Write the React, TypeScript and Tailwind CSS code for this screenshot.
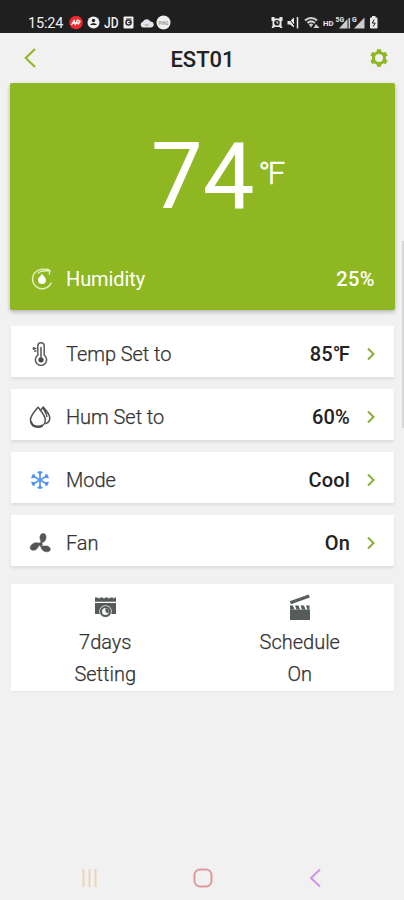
import type { ReactNode } from 'react';

interface RowProps {
  icon: ReactNode;
  label: string;
  value: ReactNode;
}

function StatusBar() {
  return (
    <header className="flex h-[33px] items-end bg-[#1f1f1f] pb-[1px] pl-7 text-[#efefef]">
      <span className="w-[36px] text-[14.500px] leading-[16px] tracking-[-0.2px]">15:24</span>
      <svg className="ml-[5px] mb-[2px]" width="104" height="15" viewBox="0 0 104 15">
        <circle cx="7" cy="7.500" r="6.800" fill="#ee2a2e" />
        <path d="M2.500 10 5 5.500l1.300 4L8.500 5l2.500 1.500-2 3M3.500 8h6" fill="none" stroke="#fff" strokeWidth="1.300" />
        <circle cx="24.500" cy="7.500" r="6" fill="#efefef" />
        <circle cx="24.500" cy="5.500" r="1.700" fill="#222" />
        <path d="M21.300 10c0-2.500 6.400-2.500 6.400 0z" fill="#222" />
        <text x="35" y="12.500" fontSize="14.500" fontWeight="500" fill="#efefef" textLength="14.500" lengthAdjust="spacingAndGlyphs">JD</text>
        <rect x="54.500" y="1.500" width="10" height="12" rx="1" fill="#efefef" />
        <circle cx="59.500" cy="7.500" r="2.500" fill="none" stroke="#333" strokeWidth="1.600" />
        <path d="M57 4h5.500M59 7.500h4" stroke="#333" />
        <path d="M73.500 12.500a3.100 3.100 0 0 1 .3-5.800 4.200 4.200 0 0 1 7.500-.2 3 3 0 0 1 .8 6z" fill="#e5e5e5" />
        <path d="m76 9 1.800 1.700L79.600 9" stroke="#888" fill="none" />
        <circle cx="94.500" cy="7.500" r="7" fill="#efefef" />
        <text x="89.500" y="9.500" fontSize="5" fontWeight="700" fill="#999" textLength="10" lengthAdjust="spacingAndGlyphs">PING</text>
      </svg>
      <svg className="ml-[98px] mb-[2px]" width="108" height="15" viewBox="0 0 108 15" fill="#e9e9e9">
        <path d="M.5 2h3v1.500h5V2h3v4h-1v5l1 2h-2l-1-1h-5l-1 1h-2l1-2V6h-1z" />
        <circle cx="6" cy="7.800" r="2.800" fill="#222" />
        <path d="M6 6v2h1.500" fill="none" stroke="#fff" strokeWidth=".9" />
        <path d="M16.500 6h2.500l4-3.500v10L19 9.500h-2.500z" />
        <path d="m17 2 8 11" stroke="#1f1f1f" strokeWidth="1" />
        <path d="M26.500 2v11.500" stroke="#e9e9e9" strokeWidth="1.500" />
        <path d="M34 5.500c3.500-3.500 9-3.500 12 0M36.500 8c2-2 5-2 7.500 0M38.500 10.300c1-1 2-1 3 0" fill="none" stroke="#d0d0d0" strokeWidth="2" />
        <path d="m38.500 10.500 1.500 2 1.500-2zM42.500 13l2.500-4 3.500 4z" fill="#d0d0d0" />
        <text x="52" y="10.500" fontSize="7.500" fontWeight="700" textLength="10.500" lengthAdjust="spacingAndGlyphs">HD</text>
        <text x="64.500" y="7" fontSize="7" fontWeight="700" textLength="8.500" lengthAdjust="spacingAndGlyphs">5G</text>
        <path d="M68 13.500 76.500 4v9.500zM77.500 3h1.600v10.500h-1.600z" fill="#ccc" />
        <text x="81" y="7" fontSize="7" fontWeight="700">G</text>
        <path d="M83 13.500 93.500 2.500v11z" fill="#ccc" />
        <path d="M100 2.500h1V1h3.500v1.500h1q1 0 1 1v9q0 1-1 1H100q-1 0-1-1v-9q0-1 1-1z" />
        <path d="m103.200 4.500-2 3.500h3l-2 3.500" fill="none" stroke="#222" />
      </svg>
    </header>
  );
}

function BackIcon() {
  return (
    <svg width="12" height="20" viewBox="0 0 12 20" fill="none" stroke="#8eb722" strokeWidth="2">
      <path d="M11 1 1.700 10 11 19" />
    </svg>
  );
}

function GearIcon() {
  return (
    <svg width="18" height="18" viewBox="0 0 18 18" fill="none" stroke="#8eb722">
      <circle cx="9" cy="9" r="5.500" strokeWidth="3" />
      <path d="M9 .2v3M9 14.800v3M1.400 4.600 4 6.100M14 11.900l2.600 1.500M1.400 13.400 4 11.900M14 6.100l2.600-1.500" strokeWidth="4.200" />
    </svg>
  );
}

function HumidityIcon() {
  return (
    <svg width="22" height="22" viewBox="0 0 22 22" fill="none" stroke="#e6f1bf" strokeWidth="1.400">
      <path d="M20.300 14.500A9.700 9.700 0 1 1 7 2.300" />
      <path d="M7 5.500C9.500 2.300 13 2.500 18 3M6.500 2.500C9 1 14 .8 16.500 1.500M16 .8l3 1.700-.8 4" />
      <path d="M11 5.800c1.700 2.600 4 4.200 4 6.200a4 4 0 0 1-8 0c0-2 2.300-3.600 4-6.200z" fill="#fff" stroke="none" />
    </svg>
  );
}

function ThermometerIcon() {
  return (
    <svg width="16" height="24" viewBox="0 0 16 24" fill="none" stroke="#5c5c5c" strokeWidth="1.500">
      <path d="M5.800 13.200V4a3.200 3.200 0 0 1 6.400 0v9.200a5.600 5.600 0 1 1-6.400 0z" />
      <circle cx="9" cy="17.800" r="2.600" fill="#444" stroke="none" />
      <path d="M9 5v12" strokeWidth="1.600" />
      <path d="M.5 6.500h4M2 9h2.500M1.800 5v3" />
    </svg>
  );
}

function DropsIcon() {
  return (
    <svg width="22" height="24" viewBox="0 0 22 24" fill="none" stroke="#505050" strokeWidth="1.500" strokeLinejoin="round">
      <path d="M9 2.300C6 6 1.500 10.500 1.500 15c0 3.500 3 6.500 7.500 6.500s7.300-2.800 7.300-6.500C16.300 10.500 12 6 9 2.300z" />
      <path d="M1.800 16.500c.8 3.300 3.500 5.400 7 5.400 2 0 3.500-.6 4.700-1.600" strokeWidth="2.200" />
      <path d="M11.800 5 14.300 2c2.700 3.500 6.500 7 6.500 11 0 3-1.800 5-4.600 5.800M14 2.200c.5 3 4.300 5.800 3.800 10" />
    </svg>
  );
}

function SnowIcon() {
  return (
    <svg width="20" height="20" viewBox="0 0 20 20" stroke="#5293ec" strokeWidth="1.600" fill="#5293ec">
      <path d="M10 1v18M2 5.500l16 9M2 14.500l16-9" />
      <path d="M10 4.500 7.500 2h5zM10 15.500 7.500 18h5zM5 7.200l-3.400.7 2.100-4zM15 12.800l3.400-.7-2.100 4zM5 12.800l-3.400-.7 2.100 4zM15 7.200l3.400.7-2.100-4z" strokeWidth=".9" />
    </svg>
  );
}

function FanIcon() {
  return (
    <svg width="22" height="22" viewBox="0 0 22 22" fill="#555" stroke="#555" strokeWidth=".6">
      <path d="M12 10.500C12 8 10.500 7 11 4.500 11.500 2 13.500.8 15.300 1.700c2.300 1.200 2 4.600.8 6.800-.9 1.500-2.300 2-4.100 2z" />
      <path d="M10.500 11.800c-1.500-1.300-4-1.500-6.200-.3C1.500 13 .6 15.500 1.500 17c1.200 1.900 4.300 1.500 6.200 0 1.600-1.400 1.800-3.200 2.800-5.200z" />
      <path d="M11.500 13.500c.6 1.800.6 3.200 2.300 4.700 2 1.700 5.200 2.200 6.800.8 1.400-1.400.7-3.800-1.600-4.700-2.200-.9-4 .4-7.500-.8z" />
      <circle cx="11.500" cy="12.200" r="1.800" />
    </svg>
  );
}

function CalendarIcon() {
  return (
    <svg width="23" height="22" viewBox="0 0 23 22" fill="#555b5a">
      <path d="M1 1.500h3L5 3l1-1.500h3l1 1.500 1-1.500h3l1 1.500 1-1.500h3l.8 1.500.7-1.500h1.500v4.300H1z" />
      <path d="M1 7h21v11H1z" />
      <circle cx="11.500" cy="15.500" r="6.300" fill="#e4e6e5" />
      <circle cx="11.500" cy="15.500" r="5.500" />
      <circle cx="11.500" cy="15.500" r="3.500" fill="#f4f4f4" />
      <path d="M11.500 12v3.500l2.500 2.200c2-2.500.3-5.700-2.500-5.700z" />
    </svg>
  );
}

function ClapperIcon() {
  return (
    <svg width="22" height="26" viewBox="0 0 22 26" fill="#555b5a">
      <path d="M.8 7.200 19.600.4l1.200 3L2 10.300z" />
      <path d="m5.500 5.500 2.500 2M10 3.800l2.500 2M14.500 2.200l2.500 2" stroke="#777" strokeWidth=".8" />
      <path d="M1 11.500h3l1.500 4H1zM6 11.500h3.500l1.500 4H7.500zM11.500 11.500H15l1.500 4H13zM17 11.500h3.500v4h-2z" />
      <path d="M1 15.500h20V26H1z" />
    </svg>
  );
}

function SettingRow({ icon, label, value }: RowProps) {
  return (
    <div className="flex h-[51px] items-center bg-white pr-[19px] text-[20px] shadow-[0_2px_3px_rgba(0,0,0,0.09)]">
      <div className="flex w-[55px] justify-center pl-[2px] pt-[4px]">{icon}</div>
      <span className="pt-[5px] font-light text-[#333] tracking-[-0.05px] [-webkit-text-stroke:0.25px_#333]">{label}</span>
      <span className="ml-auto pt-[5px] font-medium text-[#222] tracking-[0.15px]">{value}</span>
      <svg className="ml-[17px] mt-[4px]" width="8" height="14" viewBox="0 0 8 14" fill="none" stroke="#8aac35" strokeWidth="2">
        <path d="m1 1.500 5.500 5.500L1 12.500" />
      </svg>
    </div>
  );
}

const rows = [
  { icon: <ThermometerIcon />, label: 'Temp Set to', value: <>85<span className="tracking-[-1.500px]">°</span>F</> },
  { icon: <DropsIcon />, label: 'Hum Set to', value: '60%' },
  { icon: <SnowIcon />, label: 'Mode', value: 'Cool' },
  { icon: <FanIcon />, label: 'Fan', value: 'On' },
];

export default function App() {
  return (
    <div className="flex h-[900px] w-[404px] flex-col overflow-hidden bg-[#f1f1f1] font-['Roboto',sans-serif]">
      <StatusBar />
      <div className="flex h-[50px] items-center justify-between pl-6 pr-[16px]">
        <BackIcon />
        <h1 className="pr-[1px] pt-[3px] text-[22px] font-medium text-[#222]">EST01</h1>
        <GearIcon />
      </div>

      <div className="flex">
        <main className="ml-[11px] w-[383px]">
          <section className="-ml-px flex h-[227px] w-[385px] flex-col rounded-[2px] bg-[#8eb722] text-white shadow-[0_2px_4px_rgba(0,0,0,0.25)]">
            <div className="flex h-[164px] pl-[141px] pt-[39px]">
              <span className="text-[92px] leading-[109px]">74</span>
              <span className="ml-[4px] mt-[33px] text-[31px] leading-[37px] font-light tracking-[-2.500px] [-webkit-text-stroke:0.6px_#fff]">°F</span>
            </div>
            <div className="flex h-[63px] items-center pl-[21px] pr-[20px] text-[20px]">
              <HumidityIcon />
              <span className="ml-[13px] tracking-[-0.1px]">Humidity</span>
              <span className="ml-auto font-medium tracking-[0.4px]">25%</span>
            </div>
          </section>

          <div className="mt-4 flex flex-col gap-3">
            {rows.map(row => (
              <SettingRow key={row.label} {...row} />
            ))}
          </div>

          <section className="mt-[18px] h-[107px] bg-white pt-[10px] text-center text-[20px] leading-[32px] font-light text-[#333] shadow-[0_1px_2px_rgba(0,0,0,0.06)] [-webkit-text-stroke:0.25px_#333]">
            <div className="-mx-[3px] grid grid-cols-2">
              <div className="flex flex-col items-center">
                <div className="flex h-[32px] items-start pt-[2px]"><CalendarIcon /></div>
                <span>7days</span>
                <span>Setting</span>
              </div>
              <div className="flex flex-col items-center">
                <div className="flex h-[32px] items-start"><ClapperIcon /></div>
                <span>Schedule</span>
                <span>On</span>
              </div>
            </div>
          </section>
        </main>
        <div className="ml-auto mt-[158px] h-[187px] w-[2px] bg-[#d6d6d6]" />
      </div>

      <nav className="mt-auto flex h-[45px] items-center justify-between pl-[82px] pr-[83px]">
        <svg width="15" height="18" viewBox="0 0 15 18" stroke="#edd5bc" strokeWidth="2">
          <path d="M1.500 0v18M7.500 0v18M13.500 0v18" />
        </svg>
        <svg width="20" height="20" viewBox="0 0 20 20" fill="none" stroke="#e09a9d" strokeWidth="2">
          <rect x="1.500" y="1.500" width="17" height="17" rx="5.500" />
        </svg>
        <svg width="12" height="20" viewBox="0 0 12 20" fill="none" stroke="#cf96e8" strokeWidth="2">
          <path d="M11 1.500 2 10l9 8.500" />
        </svg>
      </nav>
    </div>
  );
}
